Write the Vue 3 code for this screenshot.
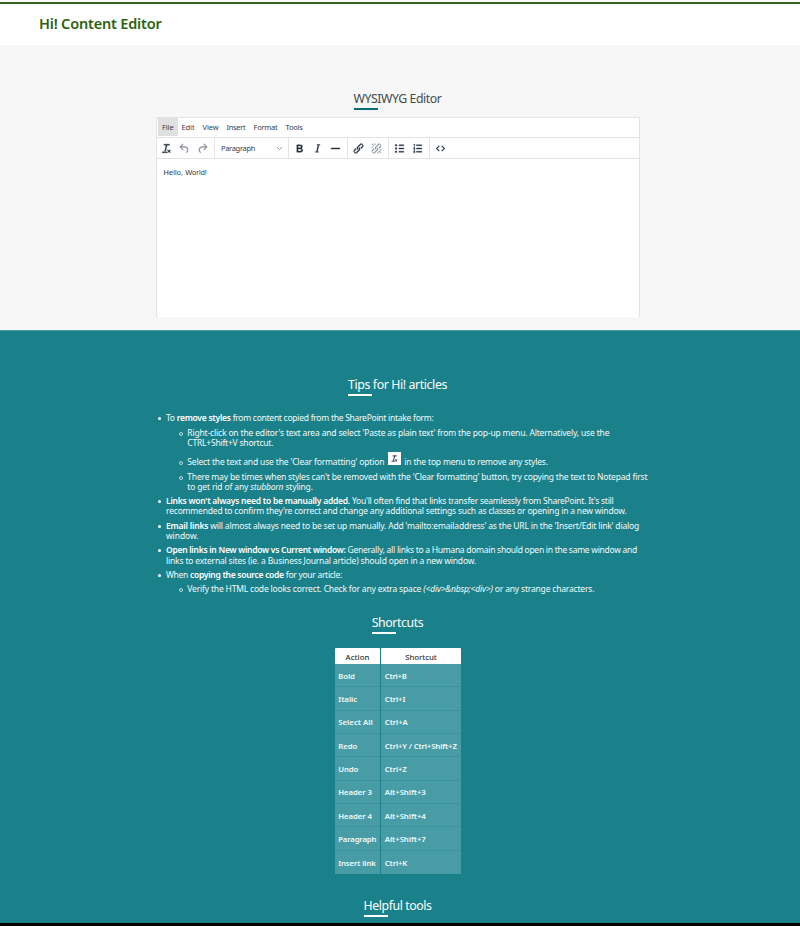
<script setup>
// Tracks a line of text so that it spans the given measure in pixels.
const vFit = {
  mounted(el, binding) {
    const natural = el.getBoundingClientRect().width
    const count = el.textContent.length
    if (count) el.style.letterSpacing = `${(binding.value - natural) / count}px`
  },
}

const menus = [
  { label: 'File', width: 11.5, active: true },
  { label: 'Edit', width: 13 },
  { label: 'View', width: 16 },
  { label: 'Insert', width: 19 },
  { label: 'Format', width: 24 },
  { label: 'Tools', width: 17 },
]

const clearIcon =
  'M13.2 6a1 1 0 0 1 0 .2l-2.6 10a1 1 0 0 1-1 .8h-.2a.8.8 0 0 1-.8-1l2.6-10H8a1 1 0 1 1 0-2h9a1 1 0 0 1 0 2h-3.8ZM5 18h7a1 1 0 0 1 0 2H5a1 1 0 0 1 0-2Zm13 1.5L16.5 18 15 19.5a.7.7 0 0 1-1-1l1.5-1.5-1.5-1.5a.7.7 0 0 1 1-1l1.5 1.5 1.5-1.5a.7.7 0 0 1 1 1L17.5 17l1.5 1.5a.7.7 0 0 1-1 1Z'
const linkIcon =
  'M6.2 12.3a1 1 0 0 1 1.4 1.4l-2 2a2 2 0 1 0 2.6 2.8l4.8-4.8a1 1 0 0 0 0-1.4 1 1 0 1 1 1.4-1.3 2.9 2.9 0 0 1 0 4L9.6 20a3.9 3.9 0 0 1-5.5-5.5l2-2Zm11.6-.6a1 1 0 0 1-1.4-1.4l2-2a2 2 0 1 0-2.6-2.8L11 10.3a1 1 0 0 0 0 1.4A1 1 0 1 1 9.6 13a2.9 2.9 0 0 1 0-4L14.4 4a3.9 3.9 0 0 1 5.5 5.5l-2 2Z'
const history = [
  { name: 'clear', d: clearIcon },
  {
    name: 'undo',
    muted: true,
    d: 'M6.4 8H12c3.7 0 6.2 2 6.8 5.1.6 2.7-.4 5.6-2.3 6.8a1 1 0 0 1-1-1.8c1.1-.6 1.8-2.7 1.4-4.6-.5-2.1-2.1-3.5-4.9-3.5H6.4l3.3 3.3a1 1 0 1 1-1.4 1.4l-5-5a1 1 0 0 1 0-1.4l5-5a1 1 0 0 1 1.4 1.4L6.4 8Z',
  },
  {
    name: 'redo',
    muted: true,
    d: 'M17.6 10H12c-2.8 0-4.4 1.4-4.9 3.5-.4 2 .3 4 1.4 4.6a1 1 0 1 1-1 1.8c-2-1.2-2.9-4.1-2.3-6.8.6-3 3-5.1 6.8-5.1h5.6l-3.3-3.3a1 1 0 1 1 1.4-1.4l5 5a1 1 0 0 1 0 1.4l-5 5a1 1 0 0 1-1.4-1.4l3.3-3.3Z',
  },
]
const groups = [
  [
    {
      name: 'bold',
      d: 'M7.8 19c-.3 0-.5 0-.6-.2l-.2-.5V5.7c0-.2 0-.4.2-.5l.6-.2h5c1.5 0 2.7.3 3.5 1 .7.6 1.1 1.4 1.1 2.5a3 3 0 0 1-.6 1.9c-.4.6-1 1-1.6 1.2.4.1.9.3 1.3.6s.8.7 1 1.2c.4.4.5 1 .5 1.6 0 1.3-.4 2.3-1.3 3-.8.7-2.1 1-3.8 1H7.8Zm5-8.3c.6 0 1.2-.1 1.6-.5.4-.3.6-.7.6-1.3 0-1.1-.8-1.7-2.3-1.7H9.3v3.5h3.4Zm.5 6c.7 0 1.3-.1 1.7-.4.4-.4.6-.9.6-1.5s-.2-1-.7-1.4c-.4-.3-1-.4-2-.4H9.4v3.8h4Z',
    },
    {
      name: 'italic',
      d: 'm16.7 4.7-.1.9h-.3c-.6 0-1 0-1.4.3-.3.3-.4.6-.5 1.1l-2.1 9.8v.6c0 .5.4.8 1.4.8h.2l-.2.8H8l.2-.8h.2c1.1 0 1.8-.5 2-1.5l2-9.8.1-.5c0-.6-.4-.8-1.4-.8h-.3l.2-.9h5.8Z',
    },
    { name: 'rule', d: 'M4 11h16v2H4Z' },
  ],
  [
    { name: 'link', d: linkIcon },
    {
      name: 'unlink',
      muted: true,
      d:
        linkIcon +
        'M7.6 6.3a.8.8 0 0 1-1 1.1L3.3 4.2a.7.7 0 1 1 1-1l3.2 3.1ZM5.1 8.6a.8.8 0 0 1 0 1.5H3a.8.8 0 0 1 0-1.5H5Zm5-3.5a.8.8 0 0 1-1.5 0V3a.8.8 0 0 1 1.5 0V5Zm6 11.8a.8.8 0 0 1 1-1l3.2 3.2a.8.8 0 0 1-1 1L16 17Zm-2.2 2a.8.8 0 0 1 1.5 0V21a.8.8 0 0 1-1.5 0V19Zm5-3.5a.7.7 0 1 1 0-1.5H21a.8.8 0 0 1 0 1.5H19Z',
    },
  ],
  [
    { name: 'bullets', d: 'M11 5h9v2h-9ZM11 11h9v2h-9ZM11 17h9v2h-9ZM4.2 4.5h3v3h-3ZM4.2 10.5h3v3h-3ZM4.2 16.5h3v3h-3Z' },
    {
      name: 'numbers',
      d: 'M10 5h10v2H10ZM10 11h10v2H10ZM10 17h10v2H10ZM6 4h1v4H6V5H5V4ZM5 10h2.4v2L6 13h1.4v1H5v-1.6L6.3 11H5ZM5 16h2.4v4H5v-.9h1.3v-.7H5.2v-.8h1.1V17H5Z',
    },
  ],
  [
    {
      name: 'code',
      d: 'M9.8 15.7c.3.3.3.8 0 1-.3.4-.9.4-1.2 0l-4.4-4.1a.8.8 0 0 1 0-1.2l4.4-4.2c.3-.3.9-.3 1.2 0 .3.3.3.8 0 1.1L6 12l3.8 3.7ZM14.2 15.7c-.3.3-.3.8 0 1 .4.4.9.4 1.2 0l4.4-4.1c.3-.3.3-.9 0-1.2l-4.4-4.2a.8.8 0 0 0-1.2 0c-.3.3-.3.8 0 1.1L18 12l-3.8 3.7Z',
    },
  ],
]

const shortcuts = [
  ['Bold', 16.5, 'Ctrl+B', 22],
  ['Italic', 19, 'Ctrl+I', 20.5],
  ['Select All', 34.5, 'Ctrl+A', 23],
  ['Redo', 19, 'Ctrl+Y / Ctrl+Shift+Z', 72],
  ['Undo', 20, 'Ctrl+Z', 22],
  ['Header 3', 33.5, 'Alt+Shift+3', 41],
  ['Header 4', 33.5, 'Alt+Shift+4', 41],
  ['Paragraph', 38, 'Alt+Shift+7', 41],
  ['Insert link', 37.5, 'Ctrl+K', 22.5],
]
</script>

<template>
  <div class="page">
    <header class="top">
      <h1><span v-fit="122.5" class="t">Hi! Content Editor</span></h1>
    </header>

    <section class="editor-area">
      <h2 class="heading dark"><span v-fit="88" class="t">WYSIWYG Editor</span></h2>
      <div class="editor">
        <nav class="menubar">
          <span v-for="m in menus" :key="m.label" class="menu" :class="{ active: m.active }">
            <span v-fit="m.width" class="t">{{ m.label }}</span>
          </span>
        </nav>
        <div class="toolbar">
          <div class="group first">
            <span v-for="i in history" :key="i.name" class="tool" :class="{ muted: i.muted }">
              <svg viewBox="0 0 24 24"><path :d="i.d" /></svg>
            </span>
          </div>
          <div class="select">
            <span v-fit="34" class="t">Paragraph</span>
            <svg class="chevron" viewBox="0 0 8 6"><path d="M1 1.3 4 4.3 7 1.3" /></svg>
          </div>
          <div v-for="(g, n) in groups" :key="n" class="group">
            <span v-for="i in g" :key="i.name" class="tool" :class="{ muted: i.muted }">
              <svg viewBox="0 0 24 24"><path :d="i.d" /></svg>
            </span>
          </div>
        </div>
        <div class="canvas"><span v-fit="43.5" class="t">Hello, World!</span></div>
      </div>
    </section>

    <section class="tips">
      <h2 class="heading"><span v-fit="99" class="t">Tips for Hi! articles</span></h2>
      <ul class="list">
        <li>
          <p><span v-fit="267.5" class="t">To <b>remove styles</b> from content copied from the SharePoint intake form:</span></p>
          <ul class="sub">
            <li>
              <p><span v-fit="422" class="t">Right-click on the editor's text area and select 'Paste as plain text' from the pop-up menu. Alternatively, use the</span></p>
              <p><span v-fit="86" class="t">CTRL+Shift+V shortcut.</span></p>
            </li>
            <li class="with-icon">
              <p>
                <span v-fit="197" class="t">Select the text and use the 'Clear formatting' option</span>
                <span class="chip"><svg viewBox="0 0 24 24"><path :d="clearIcon" /></svg></span>
                <span v-fit="143.5" class="t">in the top menu to remove any styles.</span>
              </p>
            </li>
            <li>
              <p><span v-fit="460" class="t">There may be times when styles can't be removed with the 'Clear formatting' button, try copying the text to Notepad first</span></p>
              <p><span v-fit="125.5" class="t">to get rid of any <i>stubborn</i> styling.</span></p>
            </li>
          </ul>
        </li>
        <li>
          <p><span v-fit="447.5" class="t"><b>Links won't always need to be manually added.</b> You'll often find that links transfer seamlessly from SharePoint. It's still</span></p>
          <p><span v-fit="460.5" class="t">recommended to confirm they're correct and change any additional settings such as classes or opening in a new window.</span></p>
        </li>
        <li>
          <p><span v-fit="473" class="t"><b>Email links</b> will almost always need to be set up manually. Add 'mailto:emailaddress' as the URL in the 'Insert/Edit link' dialog</span></p>
          <p><span v-fit="32.5" class="t">window.</span></p>
        </li>
        <li>
          <p><span v-fit="471" class="t"><b>Open links in New window vs Current window:</b> Generally, all links to a Humana domain should open in the same window and</span></p>
          <p><span v-fit="310" class="t">links to external sites (ie. a Business Journal article) should open in a new window.</span></p>
        </li>
        <li>
          <p><span v-fit="176" class="t">When <b>copying the source code</b> for your article:</span></p>
          <ul class="sub">
            <li>
              <p><span v-fit="407" class="t">Verify the HTML code looks correct. Check for any extra space <i>(&lt;div&gt;&amp;nbsp;&lt;div&gt;)</i> or any strange characters.</span></p>
            </li>
          </ul>
        </li>
      </ul>

      <h2 class="heading shortcuts-title"><span v-fit="51.5" class="t">Shortcuts</span></h2>
      <div class="table">
        <div class="row head">
          <span class="cell"><span v-fit="24" class="t">Action</span></span>
          <span class="cell"><span v-fit="31.5" class="t">Shortcut</span></span>
        </div>
        <div v-for="s in shortcuts" :key="s[0]" class="row">
          <span class="cell"><span v-fit="s[1]" class="t">{{ s[0] }}</span></span>
          <span class="cell"><span v-fit="s[3]" class="t">{{ s[2] }}</span></span>
        </div>
      </div>

      <h2 class="heading tools-title"><span v-fit="68" class="t">Helpful tools</span></h2>
    </section>
    <footer class="bottom"></footer>
  </div>
</template>

<style>
body {
  background: #fff;
}
</style>

<style scoped>
* {
  box-sizing: border-box;
}
.page {
  width: 800px;
  height: 926px;
  overflow: hidden;
  display: flex;
  flex-direction: column;
  font-family: 'Noto Sans', 'Open Sans', sans-serif;
}
h1,
h2,
p,
ul {
  margin: 0;
  padding: 0;
}
.t {
  display: inline-block;
  white-space: pre;
}
.top {
  flex: none;
  margin-top: 2px;
  height: 43px;
  border-top: 2px solid #366322;
  padding: 9px 39px 0;
  background: #fff;
}
h1 {
  font-size: 14.5px;
  line-height: 20px;
  font-weight: 600;
  color: #2c620f;
}
.editor-area {
  flex: none;
  height: 286px;
  background: #f7f7f7;
  border-bottom: 1px solid #4a98a1;
  padding-top: 46px;
  display: flex;
  flex-direction: column;
  align-items: center;
}
.heading {
  display: flex;
  flex-direction: column;
  font-size: 12.3px;
  line-height: 16px;
  font-weight: 400;
  color: #fff;
}
.heading::after {
  content: '';
  width: 24px;
  height: 2px;
  margin-top: 1px;
  background: #fff;
}
.heading.dark {
  color: #414a4c;
  margin-right: 5px;
}
.heading.dark::after {
  background: #0c6b78;
}
.editor {
  width: 484px;
  height: 200px;
  margin: 7px 5px 0 0;
  background: #fff;
  border: 1px solid #e3e3e3;
  border-bottom: 0;
}
.menubar {
  height: 20px;
  display: flex;
  padding: 0 0 0 1.5px;
  border-bottom: 1px solid #e3e3e3;
  font-size: 7.5px;
  color: #37414d;
}
.menu {
  height: 18px;
  line-height: 19px;
  padding: 0 4px;
}
.menu.active {
  background: #dee0e2;
}
.toolbar {
  display: flex;
  height: 21px;
  border-bottom: 1px solid #e3e3e3;
}
.group {
  display: flex;
  align-items: center;
  padding: 0 2.1px 0 1.9px;
  border-left: 1px solid #e3e3e3;
}
.group.first {
  border-left: 0;
  width: 57.5px;
  padding-left: 1.5px;
}
.tool {
  width: 18px;
  display: flex;
  justify-content: center;
  color: #222f3e;
}
.tool svg {
  width: 13px;
  height: 13px;
  fill: currentColor;
  stroke: currentColor;
  stroke-width: 0.6;
}
.tool.muted {
  color: #8a9199;
}
.tool.muted svg {
  stroke-width: 0.2;
}
.select {
  width: 74px;
  display: flex;
  align-items: center;
  justify-content: space-between;
  border-left: 1px solid #e3e3e3;
  padding: 0 5px 0 6px;
  font-size: 7.5px;
  line-height: 20px;
  color: #37414d;
}
.chevron {
  width: 7px;
  height: 5px;
  fill: none;
  stroke: #7a828b;
  stroke-width: 1;
}
.canvas {
  padding: 8px 7px;
  font-family: 'Liberation Sans', sans-serif;
  font-size: 7.4px;
  line-height: 12px;
  color: #333;
}
.tips {
  flex: none;
  height: 592px;
  background: #1a818b;
  display: flex;
  flex-direction: column;
  align-items: center;
  padding-top: 45.5px;
  color: #f2fafa;
}
.tips > .heading {
  margin-right: 5px;
}
.list {
  align-self: flex-start;
  margin: 17.7px 0 0 166px;
  font-size: 8.5px;
  line-height: 10.2px;
  list-style: none;
}
.list p {
  height: 10.2px;
  display: flex;
}
.list b {
  color: #fff;
  font-weight: 600;
}
.list li {
  position: relative;
  margin-bottom: 4.2px;
}
.list > li::before {
  content: '';
  position: absolute;
  left: -8px;
  top: 4px;
  width: 3px;
  height: 3px;
  border-radius: 50%;
  background: #fff;
}
.sub {
  list-style: none;
  margin: 4.2px 0 0 21.3px;
}
.sub > li::before {
  content: '';
  box-sizing: border-box;
  position: absolute;
  left: -8.3px;
  top: 4px;
  width: 4px;
  height: 4px;
  border-radius: 50%;
  border: 1px solid #b9dadd;
}
.list .with-icon {
  padding-top: 5.2px;
}
.list .with-icon::before {
  top: 9.2px;
}
.chip {
  width: 13px;
  height: 13px;
  margin: -7px 3.5px 0 3.5px;
  background: #fff;
  display: flex;
  align-items: center;
  justify-content: center;
}
.with-icon p {
  align-items: center;
}
.chip svg {
  width: 9px;
  height: 9px;
  fill: #222f3e;
  stroke: #222f3e;
  stroke-width: 0.6;
}
.tips > .shortcuts-title {
  margin-top: 16.7px;
}
.table {
  width: 126px;
  margin: 13.7px 4.5px 0 0;
  font-size: 7.8px;
  font-weight: 600;
}
.row {
  display: grid;
  grid-template-columns: 45.5px 79.5px;
  column-gap: 1px;
  height: 23.33px;
}
.cell {
  display: flex;
  align-items: center;
  padding: 1px 3.5px 0;
  background: #489ca5;
  border-bottom: 1px solid #3a939c;
  line-height: 10px;
}
.head {
  height: 16px;
  font-weight: 500;
  color: #333;
}
.head .cell {
  background: #fff;
  border-bottom: 0;
  justify-content: center;
  border-radius: 1px 1px 0 0;
}
.row:last-child .cell {
  border-bottom: 0;
}
.tips > .tools-title {
  margin-top: 24.4px;
}
.bottom {
  flex: none;
  height: 3px;
  background: #000;
}
</style>
